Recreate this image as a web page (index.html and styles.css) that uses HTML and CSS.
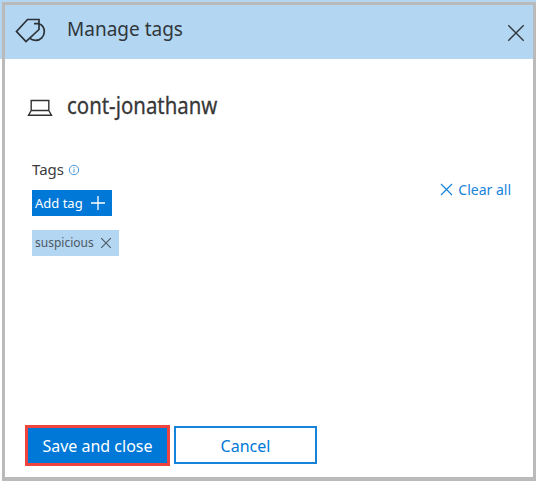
FILE: index.html
```html
<!DOCTYPE html>
<html lang="en">
<head>
<meta charset="utf-8">
<title>Manage tags</title>
<link rel="stylesheet" href="styles.css">
</head>
<body>
<main class="panel">
  <header class="header">
    <svg class="tags-icon" width="32" height="28" viewBox="0 0 32 28" fill="none" stroke="#2b3136" stroke-width="1.7"><path d="M12.500 2.500H24V12.500L11 24.500L1.500 14.500Z"/><path d="M19 6.700H24C27.500 8 29.300 11 29.300 14.500C29.300 19.500 25.500 23.400 20.500 23.400C18 23.400 16 22.500 14.500 21.200"/></svg>
    <h1 class="title"><span>Manage tags</span></h1>
    <svg class="close" width="18" height="18" viewBox="0 0 18 18" fill="none" stroke="#30363b" stroke-width="1.3"><path d="M1.300 1.300L16.700 16.700M16.700 1.300L1.300 16.700"/></svg>
  </header>
  <section class="content">
    <div class="device">
      <svg width="26" height="18" viewBox="0 0 26 18" fill="none" stroke="#333" stroke-width="1.4"><path d="M4.200 1.500H21.800V11.500H4.200ZM4.200 11.500L1.500 16.300H24.500L21.800 11.500"/></svg>
      <h2 class="name"><span>cont-jonathanw</span></h2>
    </div>
    <div class="tag-row">
      <div class="tag-group">
        <div class="label"><span>Tags</span>
          <svg width="12" height="12" viewBox="0 0 12 12" fill="none" stroke="#4096dc"><circle cx="6" cy="6" r="4.700"/><path d="M6 5.200V8.700M6 3.200V4.300"/></svg>
        </div>
        <button class="add"><span>Add tag</span><svg width="16" height="16" viewBox="0 0 16 16" stroke="#fff" stroke-width="1.300"><path d="M1 8H15M8 1V15"/></svg></button>
        <div class="chip"><span>suspicious</span><svg width="12" height="12" viewBox="0 0 12 12" stroke="#4b5863" stroke-width="1.100"><path d="M1.200 1.200L10.800 10.800M10.800 1.200L1.200 10.800"/></svg></div>
      </div>
      <button class="clear"><svg width="13" height="13" viewBox="0 0 13 13" stroke="#1683db" stroke-width="1.200"><path d="M1 1L12 12M12 1L1 12"/></svg><span>Clear all</span></button>
    </div>
  </section>
  <footer class="actions">
    <button class="save"><span>Save and close</span></button>
    <button class="cancel"><span>Cancel</span></button>
  </footer>
</main>
</body>
</html>
```
FILE: styles.css
```css
* { box-sizing: border-box; }
body {
  margin: 0;
  width: 536px;
  height: 483px;
  overflow: hidden;
  padding: 2px 0 2px 2px;
  background: linear-gradient(#b3d6f2, #b3d6f2) 0 0 / 100% 59px no-repeat #fff;
  font-family: "Noto Sans", "Open Sans", sans-serif;
  color: #3c3c3c;
}
.panel {
  display: flex;
  flex-direction: column;
  width: 534px;
  height: 479px;
  border: 3px solid #bababa;
  border-bottom-width: 4px;
  background: #fff;
}
h1, h2 { margin: 0; font-weight: 400; }
button { margin: 0; padding: 0; border: 0; background: none; font-family: inherit; }
span { display: inline-block; white-space: nowrap; }
.header {
  display: flex;
  height: 54px;
  padding: 12px 8px 0 10px;
  background: #b3d6f2;
}
.title { margin: 0 0 0 20px; font-size: 19px; line-height: 24px; color: #30363b; }
.close { margin: 7px 0 0 auto; }
.content { flex: 1; padding: 29px 22px 0 22px; }
.device { display: flex; height: 34px; align-items: center; }
.device svg { margin-top: 5px; }
.name { margin-left: 14px; font-size: 24px; line-height: 34px; color: #383838; -webkit-text-stroke: .3px; }
.name span { transform: scaleX(.85); transform-origin: left; }
.tag-row { display: flex; justify-content: space-between; padding: 37px 0 0 5px; }
.label { display: flex; height: 20px; align-items: center; gap: 4px; font-size: 15px; line-height: 20px; }
.label svg { margin-top: 1px; }
.add {
  display: flex;
  align-items: center;
  justify-content: space-between;
  width: 80px;
  height: 26px;
  margin-top: 11px;
  padding: 0 6px 1px 4px;
  background: #0078d7;
  color: #fff;
  font-size: 13px;
}
.chip {
  display: flex;
  align-items: center;
  justify-content: space-between;
  width: 87px;
  height: 26px;
  margin-top: 14px;
  padding: 0 7px 1px 4px;
  background: #b3d6f2;
  color: #4b5863;
  font-size: 12px;
}
.chip span, .add span { margin-left: -1px; }
.clear { display: flex; align-items: center; gap: 5px; height: 22px; margin-top: 19px; color: #1683db; font-size: 14px; }
.actions { display: flex; gap: 4px; height: 52px; padding-left: 20px; }
.save { width: 145px; height: 41px; border: 3px solid #ed443d; background: #0078d7; color: #fff; font-size: 16px; }
.cancel { width: 143px; height: 38px; margin-top: 1px; padding-top: 1px; border: 2px solid #1683db; background: #fff; color: #0078d7; font-size: 16px; }
```
